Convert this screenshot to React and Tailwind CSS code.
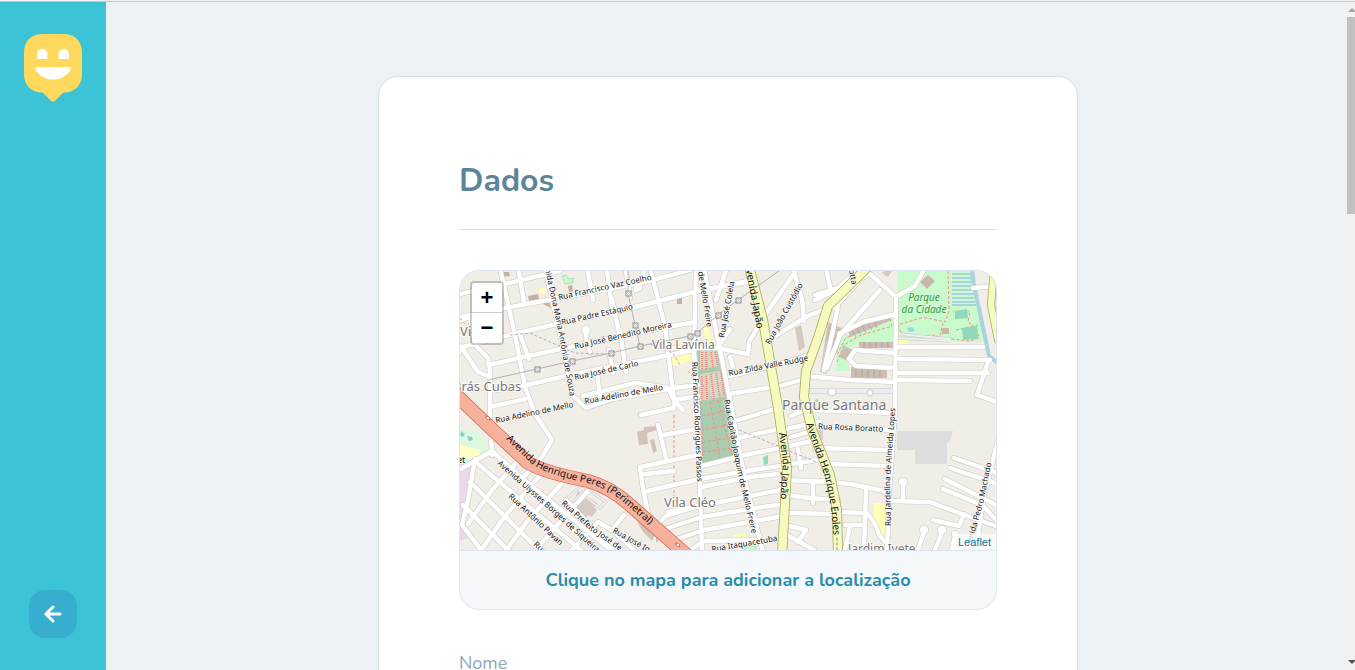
import React from "react";

const buildings = [
  ["M828 322l-8 50 6 2 12-24 4-22z", "#d5c8bf"],
  ["M834 324h-5l-4 18h5z M841 340l-6-3-12 31 6 3z", "#cbbdb4"],
  ["M848 330l40-16 4 6-42 17z", "#cbbdb4"],
  ["M859 342h36v6h-36z M851 367l36 1v10h-36z M844 346l9 4-5 11-9-4z", "#cbbdb4"],
  ["M795 328l6-3 4 22-6 4z", "#d5c8bf"],
  ["M928 275l7 6-8 8-7-7z M942 328h7v6h-7z", "#c9b7a9"],
  ["M884 271h8l-4 6-6-4z", "#d5c8bf"],
  ["M677 297h5v7h-5z M528 296l10-2 1 5-10 2z M541 303l8-1 2 6z M568 286l4-1 1 6-4 1z M500 272h9l1 4-9 1z", "#c4b1a3"],
  ["M637 432l7-2v-3l12-1 1 4-10 3 1 11-9 1z M650 440l4-1 3 12-4 2z", "#d2c2b8"],
  ["M637 522l9 4 9 9-3 6-8-8z M656 536l4 3-4 4z", "#d2c2b8"],
  ["M578 491l19 12-3 4 3 3-5 7-4-2-3 4-15-11z", "#d6cbc4"],
  ["M815 425h8v15h-8z", "#d9cfc8"],
  ["M897 431h56l-4 12h-52z M897 443h50v21h-32v-14h-18z", "#dddddd"],
];

const minorRoads = [
  "M500 268L516 340L525 387L535 414L552 440L541 458L522 479",
  "M455 318L500 309L570 296L635 284L668 276L690 270",
  "M455 295L505 284L560 271",
  "M455 323L470 317L475 345L488 358L490 372L490 420L492 455",
  "M455 360L462 347L475 344L505 336L570 321L635 307L698 291L757 280",
  "M455 340L464 351L478 372L490 377",
  "M488 365L570 347L635 333L695 322",
  "M490 391L527 385L583 372L635 362L694 350",
  "M490 407L525 399",
  "M583 396L635 383L668 388L674 400",
  "M545 268L558 325L573 396L586 408L613 399L668 389",
  "M520 334L529 359M519 272l5 31",
  "M588 272l5 28M607 271l6 43M626 271l4 27M586 331v9l4 12M612 299l8 39M620 330l6 42M597 372l3 24M609 350l4 23",
  "M650 268L665 326L674 400L683 410",
  "M636 290L638 286L645 270",
  "M696 268L694 350L698 420L702 552",
  "M716 300L727 268M704 268L713 315L720 350L730 400L745 480L763 552",
  "M698 291L748 281",
  "M717 348L748 354L749 342L763 318L795 272",
  "M717 348L674 348M730 329L718 347M730 357l3 10",
  "M730 376L776 365L812 354",
  "M729 394L780 386L808 378",
  "M641 415L674 408L675 400L698 396",
  "M674 388L698 385",
  "M658 425L666 458M663 435L696 429M738 438L779 429M738 420L775 409",
  "M770 339L808 316L833 306",
  "M793 268L802 300L804 321",
  "M780 430L820 422M791 437L812 431",
  "M640 467L697 455M702 466L745 455L785 447L812 441",
  "M640 467L643 489L649 518M656 526L666 516L702 505",
  "M645 474L674 471M647 491L700 479L747 471L817 460",
  "M702 487L750 477L778 474M668 512L700 506L750 496L785 489",
  "M668 528L702 517L755 508L785 504M671 541L704 530L755 521L783 516M690 550L704 541L755 540",
  "M791 416L805 410M798 449L801 468",
  "M786 480L828 482M785 495L810 498L838 500M813 483V503",
  "M786 513L840 514M785 525L806 530L798 542M787 535L814 550",
  "M815 300L836 290L860 268M815 295L853 283L869 274",
  "M826 268L831 292M838 306L833 330L824 370",
  "M869 273L896 297L895 410L889 494L887 550",
  "M880 290L840 335L827 368",
  "M858 282L834 308M896 314L863 322L839 334",
  "M896 297L915 286L925 268",
  "M896 347H983M895 353L855 350L849 359L856 366L895 368M896 359L990 360M896 373H988M896 380L970 381",
  "M805 376L850 380L895 382M988 362L977 395L998 402",
  "M973 288L998 286",
  "M814 410L892 413M818 427L892 430M815 448L889 450M825 464L889 466M821 481L850 484L889 492M838 512L866 513Q875 520 879 535L893 550",
  "M866 489L864 551M845 525L863 525M850 526L845 550",
  "M889 501L930 502L970 517L996 526M903 485L903 501",
  "M954 458L998 473M950 468L998 484M945 479L998 506M943 489L982 505L998 522M998 440L983 500L976 550M933 520L959 526L964 514",
  "M924 532L918 550M942 532L935 550M955 535L952 550",
  "M455 472L475 461L492 451L524 480L612 551M478 464L583 552M475 459L468 500L462 525L482 551M470 482L540 551M463 505L510 552",
  "M524 453L510 470L492 490L468 524M545 470L530 487L505 516L480 552M563 482L545 502L528 520L505 552M588 491L559 523L535 551M624 515L612 530L598 522L570 552M612 530L635 551",
  "M566 500L596 531L614 552",
];

const labels = [
  ["M559 300L655 279", "Rua Francisco Vaz Coelho"],
  ["M562 325L638 308", "Rua Padre Estáquio"],
  ["M575 349L676 326", "Rua José Benedito Moreira"],
  ["M575 380L642 365", "Rua José de Carlo"],
  ["M585 404L668 389", "Rua Adelino de Mello"],
  ["M496 423L579 406", "Rua Adelino de Mello"],
  ["M545 269L558 330L573 412", "nida Dona Maria Antônia de Souza"],
  ["M698 272L709 340", "de Mello Freire"],
  ["M724 338L736 274", "Rua José Colela"],
  ["M770 345L808 276", "Rua João Custódio"],
  ["M729 376L811 360", "Rua Zilda Valle Rudge"],
  ["M692 362L695 430L698 500", "Rua Francisco Rodrigues Passos"],
  ["M724 400L737 470L755 548", "Rua Capitão Joaquim de Mello Freire"],
  ["M818 429L892 432", "Rua Rosa Boratto"],
  ["M891 526L890 480L896 400", "Rua Jardelina de Almeida Lopes"],
  ["M972 543L984 500L994 450", "enida Pedro Machado"],
  ["M712 552L782 540", "Rua Itaquacetuba"],
  ["M497 464L540 502L605 560", "Avenida Ulysses Borges de Siqueira"],
  ["M508 497L570 555", "Rua Antônio Pavan"],
  ["M561 504L590 530L630 558", "Rua Prefeito José de"],
  ["M612 532L665 562", "Rua José Ig"],
  ["M533 545L560 570", "Rua Ant"],
  ["M849 270L853 292", "otta"],
];

const avenues = [
  ["M506 439L532 464Q545 474 587 483Q605 487 622 501L665 538", "Avenida Henrique Peres (Perimetral)"],
  ["M746 270L758 334", "venida Japão"],
  ["M779 433L783 465L780 505", "Avenida Japão"],
  ["M806 424L818 457Q832 490 834 548", "Avenida Henrique Eroles"],
];

const places = [
  [652, 349, 12, "Vila Lavínia"],
  [664, 507, 13, "Vila Cléo"],
  [782, 410, 14, "Parque Santana"],
  [848, 553, 12, "Jardim Ivete"],
  [453, 391, 13, "Brás Cubas"],
  [460, 336, 13, "Vi"],
];

const pylons = [[537, 369], [572, 361], [611, 353], [640, 346], [690, 336], [697, 333], [718, 315], [738, 300], [628, 293], [635, 325]];
const culDeSacs = [[586, 330, 4], [638, 287, 4], [903, 482, 4], [924, 530, 4], [942, 530, 4], [955, 534, 3]];

function StreetMap() {
  return (
    <svg
      className="block h-full w-full"
      viewBox="460 271 536 279"
      preserveAspectRatio="xMidYMid slice"
      role="img"
      aria-label="Mapa"
      fontFamily="'Noto Sans', sans-serif"
    >
      <rect x="400" y="200" width="700" height="400" fill="#f1eee8" />
      <path d="M460 428L478 432L491 451L479 465L460 460z" fill="#dcf8dd" />
      <path d="M460 445L481 450L478 460L460 457z" fill="#ffffc8" />
      <path d="M460 464L474 466L463 520L472 536L460 541z" fill="#ead9e8" />
      <path d="M461 431l4 3-2 3-3-1z M467 436l5 1 1 3-4 1z" fill="#8ccbd5" />
      <path d="M898 268H971L985 342L897 341z" fill="#c8facc" />
      <path d="M836 371L837 345L843 336L889 319H894V342L862 343L843 350L850 371z" fill="#c8facc" />
      <path d="M562 276l4-1 2 4 5-1v5l-8 1z M744 546h12v5h-12z" fill="#c8facc" stroke="#8de0b0" strokeWidth="0.7" />
      <path d="M540 288h6v6h-7z M703 328l5-1 5 20-6 1z M670 356l22-6v11l-21 5z M733 535l12-2 1 9-12 1z M874 503h11l1 37-12-8z M898 340h9v4h-9z" fill="#ffffb8" />
      <path d="M697 349L717 349L738 457L702 465z" fill="#aacbaf" />
      <path d="M700 351L716 351L719 366L700 370z M700 374L721 371L725 397L699 401z" fill="#d9d5c4" />
      <g fill="none" stroke="#f07d72" strokeWidth="1.6" strokeDasharray="1 1">
        <path d="M702 352V369M706 352V369M711 352l2 15M715 352l3 14M702 376V400M706 376l1 24M711 374l3 25M716 373l4 25M721 372l3 24" />
      </g>
      <g fill="none" stroke="#ff8a82" strokeWidth="1" strokeDasharray="3 2">
        <path d="M701 402L703 461M710 402L720 459M718 400L732 455M701 430L728 425M703 442L730 438M703 452L733 448M702 416L726 411" />
        <path d="M948 271l1 40-4 11-18-4-7 0-22 7 3 8 18 3 15-1 8 3 28 3 9-3-3-10-8-6 2-10-17-1M837 362l7-17 15-9 33-10-2-6-29 9-16 10-8 16M943 323l-4 17M956 330l22-5" />
        <path d="M674 415V497M714 318l4 20M716 320l7-6 3 8-5 12" />
      </g>
      <path d="M955 311l12-2 1 9-13 1z M962 328l15-2 1 13-15 1z" fill="#8fd9bf" />
      <path d="M763 457l5-2v9l-4 1z M815 400l3-1v3h-3z" fill="#8fd9bf" />
      <path d="M907 328l5-1 3 4-6 1z" fill="#9dd3e8" />
      <g fill="none" stroke="#aad3df">
        <path d="M972 270L974 285L989 356L998 363" strokeWidth="4" />
        <path d="M952 274h22M952 278h22M952 282h22M952 286h22M952 290h22M952 294h22M952 298h22M952 302h23M952 305h24" strokeWidth="2.2" />
      </g>
      {buildings.map(([d, fill]) => (
        <path key={d} d={d} fill={fill} />
      ))}
      <path d="M829 328l11 2M828 333l11 2M827 338l10 2M852 330l4 7M857 328l4 7M862 326l4 7M868 324l4 6M874 322l3 6M864 342v6M870 342v6M876 342v6M882 342v6M888 342v6M856 367v10M862 367v10M868 367v10M874 367v10M880 367v10" stroke="#ab9a90" strokeWidth="0.7" />
      <path d="M566 499L583 484M571 503L590 486M583 486L606 502L600 508L582 494M898 334L950 339M898 338L950 341" fill="none" stroke="#ccc" strokeWidth="3" />
      <path d="M566 499L583 484M571 503L590 486M583 486L606 502L600 508L582 494M898 334L950 339M898 338L950 341" fill="none" stroke="#eee" strokeWidth="1.8" />

      <g fill="none" strokeLinecap="round" strokeLinejoin="round">
        <g stroke="#cfcbc8" strokeWidth="5.6">
          {minorRoads.map((d) => (
            <path key={d} d={d} />
          ))}
          {culDeSacs.map(([x, y, r]) => (
            <circle key={x} cx={x} cy={y} r={r - 2} />
          ))}
          <path d="M806 391H892" stroke="#c8c8c8" />
        </g>
        <g stroke="#fff" strokeWidth="4.4">
          {minorRoads.map((d) => (
            <path key={d} d={d} />
          ))}
          {culDeSacs.map(([x, y, r]) => (
            <circle key={x} cx={x} cy={y} r={r - 2} fill="#fff" />
          ))}
          <path d="M806 391H892" stroke="#ededed" />
        </g>
        <circle cx="832" cy="392" r="4" fill="#fff" stroke="#ddd" strokeWidth="2" />
        <circle cx="870" cy="393" r="3" fill="#fff" stroke="#ddd" strokeWidth="2" />

        <g stroke="#a8ad55">
          <path d="M749 266L763 320L778 408L787 468L782 555" strokeWidth="10" />
          <path d="M869 266L828 306L818 338L806 371L804 397L812 430L830 475L837 510L838 555" strokeWidth="10" />
          <path d="M994 268L991 305L998 340" strokeWidth="8" />
        </g>
        <g stroke="#f7fabf">
          <path d="M749 266L763 320L778 408L787 468L782 555" strokeWidth="8.4" />
          <path d="M869 266L828 306L818 338L806 371L804 397L812 430L830 475L837 510L838 555" strokeWidth="8.4" />
          <path d="M994 268L991 305L998 340" strokeWidth="6.4" />
        </g>
        <path d="M454 393L496 433L527 462Q542 472 588 481Q610 487 630 505L690 558" stroke="#d96c55" strokeWidth="14" />
        <path d="M454 393L496 433L527 462Q542 472 588 481Q610 487 630 505L690 558" stroke="#f5b19c" strokeWidth="12.4" />
        <path d="M486 416l3 1 1 3-3-1z M676 543l3 1 1 3-3-1z" stroke="#a66f65" strokeWidth="0.8" fill="#fff" />
        <path d="M837 538V550" stroke="#aaa" strokeDasharray="2 3" strokeWidth="1.5" />
      </g>

      <g fill="none" stroke="#bda9c2" strokeWidth="1" strokeDasharray="3 2">
        <path d="M510 335L530 333L575 353L605 354M650 344L673 353L680 365M688 371L695 380M739 430L816 462M702 384l12 17M460 318l10 12" />
      </g>
      <g fill="none" stroke="#999" strokeWidth="0.7">
        <path d="M488 380L537 369L572 361L611 353L640 346L690 336L697 333L718 315L738 300L783 268M628 271V293L635 325L640 346" />
        {pylons.map(([x, y]) => (
          <g key={x}>
            <rect x={x - 2} y={y - 2} width="5" height="5" fill="#f3f0eb" stroke="#777" strokeWidth="0.8" />
            <path d={`M${x - 1} ${y - 1}l3 3m0-3l-3 3`} stroke="#aaa" strokeWidth="0.5" />
          </g>
        ))}
      </g>

      <g fill="#777" stroke="#fff" strokeOpacity="0.85" strokeWidth="2" paintOrder="stroke" strokeLinejoin="round">
        {places.map(([x, y, size, name]) => (
          <text key={name} x={x} y={y} fontSize={size}>
            {name}
          </text>
        ))}
      </g>
      <text x="457" y="463" fontSize="9" fill="#222">et</text>
      <g fill="#2f9a3c" stroke="#d8fadb" strokeWidth="1.5" paintOrder="stroke" fontSize="10" fontStyle="italic" textAnchor="middle">
        <text x="924" y="301">Parque</text>
        <text x="924" y="313">da Cidade</text>
      </g>
      <g fill="#111" fontSize="8" stroke="#fff" strokeOpacity="0.7" strokeWidth="1.6" paintOrder="stroke" strokeLinejoin="round">
        {labels.map(([d, name], i) => (
          <React.Fragment key={d}>
            <path id={`street-${i}`} d={d} fill="none" stroke="none" />
            <text>
              <textPath href={`#street-${i}`}>{name}</textPath>
            </text>
          </React.Fragment>
        ))}
      </g>
      <g fill="#111" fontSize="10">
        {avenues.map(([d, name], i) => (
          <React.Fragment key={d}>
            <path id={`avenue-${i}`} d={d} fill="none" />
            <text>
              <textPath href={`#avenue-${i}`}>{name}</textPath>
            </text>
          </React.Fragment>
        ))}
      </g>
    </svg>
  );
}

function Logo() {
  return (
    <svg width="58" height="68" viewBox="0 0 58 68" role="img" aria-label="Happy">
      <path
        d="M19 0H39C51 0 58 7 58 19V40C58 51 51 58.500 39.500 58.500L31 66.800Q29 68.800 27 66.800L18.500 58.500C7 58.500 0 51 0 40V19C0 7 7 0 19 0Z"
        fill="#ffd95e"
      />
      <path d="M13 25V20a5.200 5.200 0 0 1 10.400 0V25Z M34.600 25V20a5.200 5.200 0 0 1 10.400 0V25Z" fill="#fff" />
      <path d="M13 33H45Q47.500 33.300 46.500 36C42.500 42 36.500 45.600 29 45.600S15.500 42 11.500 36Q10.500 33.300 13 33Z" fill="#fff" />
    </svg>
  );
}

function ScrollRail() {
  return (
    <div className="flex w-[11px] shrink-0 flex-col items-end bg-[#f1f1f1]" aria-hidden="true">
      <svg className="h-[15px] w-2 shrink-0" viewBox="0 0 8 15">
        <path d="M1 10L5 6L9 10Z" fill="#a3a3a3" />
      </svg>
      <div className="h-[197px] w-2 bg-[#c1c1c1]" />
      <svg className="mt-auto h-[15px] w-2 shrink-0" viewBox="0 0 8 15">
        <path d="M1 5L5 9L9 5Z" fill="#505050" />
      </svg>
    </div>
  );
}

export default function App() {
  return (
    <div className="flex h-screen flex-col overflow-hidden bg-[#ebf1f5] font-['Nunito','Noto_Sans',sans-serif]">
      <div className="h-0.5 shrink-0 border-b border-[#c8c8c8] bg-[#f1f1f1]" />
      <div className="flex min-h-0 flex-1">
        <aside className="flex w-[106px] shrink-0 flex-col items-center justify-between bg-[#3dc3d6] py-8">
          <Logo />
          <button type="button" aria-label="Voltar" className="flex size-12 items-center justify-center rounded-2xl bg-[#37aecf]">
            <svg width="24" height="24" viewBox="0 0 24 24" fill="none" stroke="#fff" strokeWidth="3" strokeLinecap="round" strokeLinejoin="round">
              <path d="M19 12H5M12 19L4.800 12L12 5" />
            </svg>
          </button>
        </aside>

        <main className="min-w-0 flex-1 overflow-hidden pt-[74px] pl-1.5">
          <form className="mx-auto w-full max-w-[700px] rounded-[20px] border border-[#d3e2e5] bg-white p-20">
            <fieldset>
              <legend className="w-full border-b border-[#d3e2e5] pb-6 text-[32px] leading-[48px] font-bold text-[#5c8599]">
                Dados
              </legend>

              <div className="mt-10 overflow-hidden rounded-[20px] border border-[#dde3f0] bg-[#f4f8fb]">
                <div className="relative h-[279px]">
                  <StreetMap />
                  <div className="absolute top-2.5 left-2.5 flex flex-col overflow-hidden rounded-sm border-2 border-black/20 bg-white bg-clip-padding font-['Liberation_Sans',sans-serif] text-[22px] leading-[30px] font-bold text-black">
                    <button type="button" aria-label="Zoom in" className="h-[30px] w-[30px] border-b border-[#ccc]">
                      +
                    </button>
                    <button type="button" aria-label="Zoom out" className="h-[30px] w-[30px]">
                      −
                    </button>
                  </div>
                  <div className="absolute right-0 bottom-0 bg-white/70 px-[5px] font-['Liberation_Sans',sans-serif] text-[11px] leading-4">
                    <a href="#leaflet" className="text-[#0078a8]">
                      Leaflet
                    </a>
                  </div>
                </div>
                <div className="flex h-[59px] items-center justify-center border-t border-[#dde3f0] text-[18px] font-bold text-[#2a8cab]">
                  Clique no mapa para adicionar a localização
                </div>
              </div>

              <div className="mt-10 flex flex-col gap-2">
                <label htmlFor="name" className="text-[18px] leading-[26px] text-[#8fa7b3]">
                  Nome
                </label>
                <input id="name" className="h-16 w-full rounded-[20px] border border-[#d3e2e5] bg-[#f5f8fa] px-4" />
              </div>
            </fieldset>
          </form>
        </main>
        <ScrollRail />
      </div>
    </div>
  );
}
